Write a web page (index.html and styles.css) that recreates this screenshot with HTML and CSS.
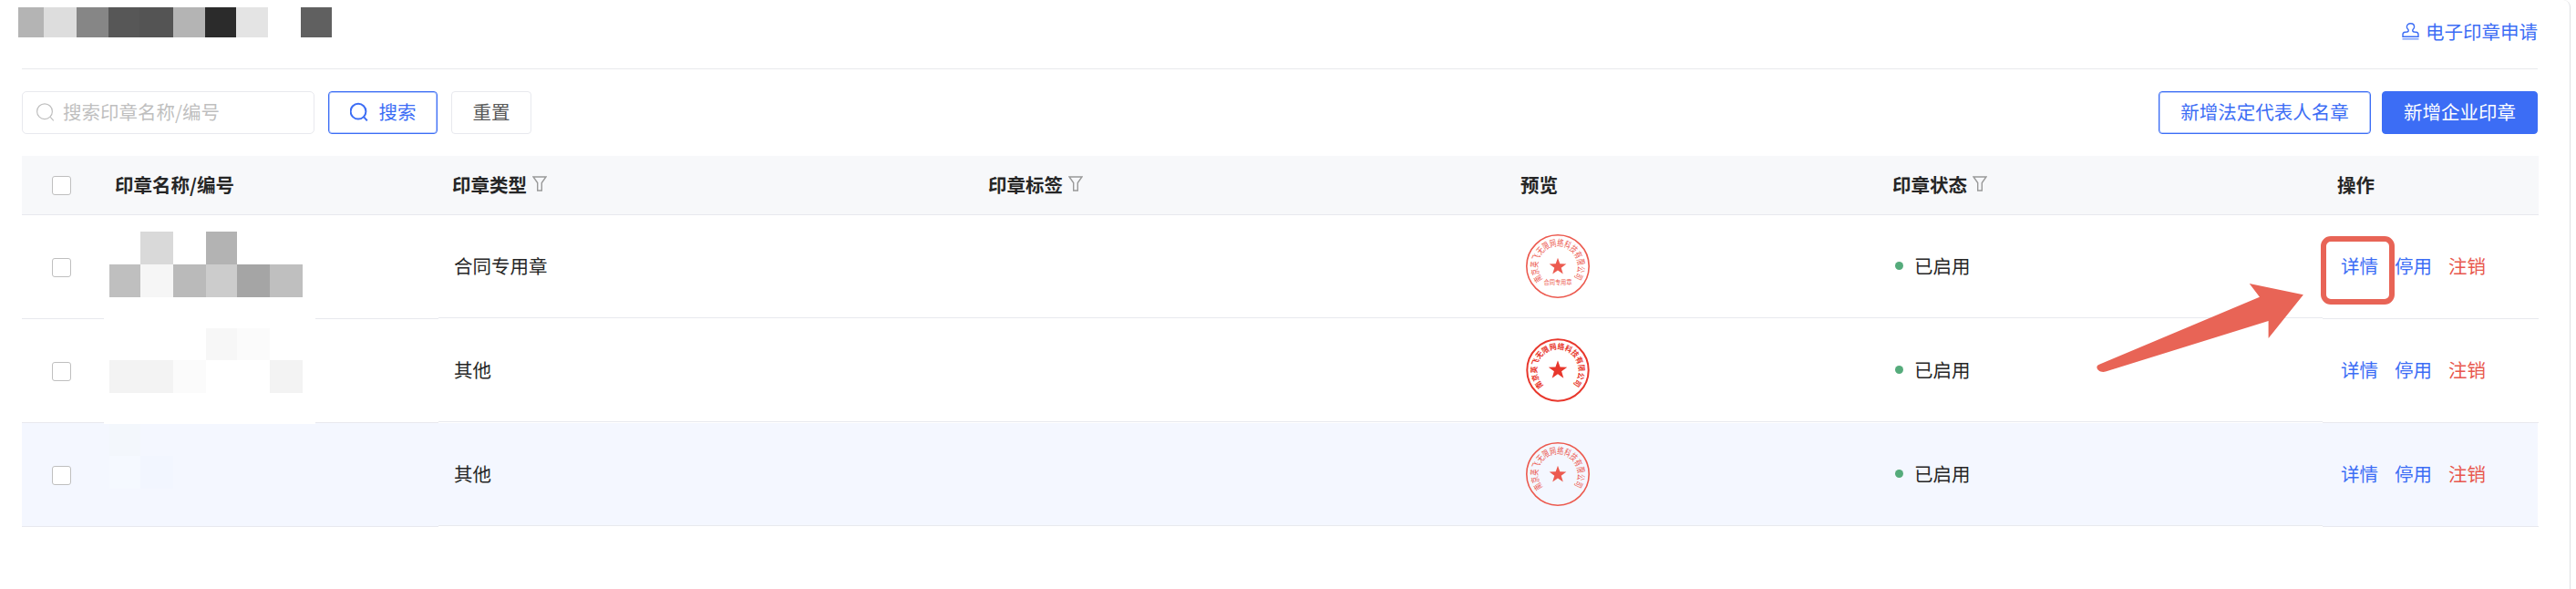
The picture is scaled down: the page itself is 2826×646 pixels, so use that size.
FILE: index.html
```html
<!DOCTYPE html>
<html lang="zh-CN">
<head>
    <meta charset="UTF-8">
    <meta name="viewport" content="width=device-width, initial-scale=1.0">
    <title>印章管理</title>
    <link rel="stylesheet" href="styles.css">
</head>
<body>
    <!-- 公用图标 -->
    <svg class="sprite" aria-hidden="true">
        <symbol id="icon-search" viewBox="0 0 20 22">
            <circle cx="9" cy="10.2" r="8.4"/>
            <path d="M15.2 16.4l3.6 4"/>
        </symbol>
        <symbol id="icon-filter" viewBox="0 0 16 17">
            <path d="M1 1h14l-4.700 6.500V16H5.700V7.500z"/>
        </symbol>
        <symbol id="icon-stamp" viewBox="0 0 19 19">
            <path d="M1 15.200v-2.400c0-1.600 1-2.300 2.500-2.500l2-.3c1.500-.3 2-1 1.600-2.200C6.700 6.900 5.400 6.200 5.400 4.500c0-2.200 1.800-3.700 4.100-3.700s4.100 1.500 4.100 3.700c0 1.700-1.300 2.400-1.700 3.300-.4 1.200.1 1.900 1.600 2.200l2 .3c1.500.2 2.500.9 2.500 2.500v2.400z"/>
            <path class="stamp-base" d="M.5 17.800h18"/>
        </symbol>
        <symbol id="icon-star" viewBox="-10 -10 20 20">
            <path d="M0-10L2.350-3.240 9.510-3.090 3.800 1.240 5.880 8.090 0 4 -5.880 8.090 -3.800 1.240 -9.510-3.090 -2.350-3.240z"/>
        </symbol>
    </svg>

    <main class="page">
        <header class="page-header">
            <div class="title-mask">
                <i class="g1"></i><i class="g2"></i><i class="g3"></i><i class="g4"></i><i class="g5"></i><i class="g1"></i><i class="g6"></i><i class="g7"></i><i></i><i class="g8"></i>
            </div>
            <a class="apply-link"><svg class="icon-stamp"><use href="#icon-stamp"/></svg>电子印章申请</a>
        </header>

        <!-- 搜索栏 -->
        <div class="toolbar">
            <div class="search-input"><svg class="icon-search"><use href="#icon-search"/></svg>搜索印章名称/编号</div>
            <button class="btn btn-outline btn-search"><svg class="icon-search"><use href="#icon-search"/></svg>搜索</button>
            <button class="btn btn-reset">重置</button>
            <button class="btn btn-outline btn-legal">新增法定代表人名章</button>
            <button class="btn btn-primary">新增企业印章</button>
        </div>

        <!-- 印章列表 -->
        <section class="table">
            <div class="row row-head">
                <div class="cell cell-check"><span class="checkbox"></span></div>
                <div class="cell cell-name">印章名称/编号</div>
                <div class="cell cell-type">印章类型<svg class="icon-filter"><use href="#icon-filter"/></svg></div>
                <div class="cell cell-tag">印章标签<svg class="icon-filter"><use href="#icon-filter"/></svg></div>
                <div class="cell cell-preview">预览</div>
                <div class="cell cell-status">印章状态<svg class="icon-filter"><use href="#icon-filter"/></svg></div>
                <div class="cell cell-action">操作</div>
            </div>

            <div class="row">
                <div class="cell cell-check fixed"><span class="checkbox"></span></div>
                <div class="cell cell-name fixed">
                    <div class="mask mask-1">
                        <i></i><i class="m1"></i><i></i><i class="m2"></i><i></i><i></i>
                        <i class="m3"></i><i class="m4"></i><i class="m5"></i><i class="m6"></i><i class="m7"></i><i class="m3"></i>
                    </div>
                </div>
                <div class="cell cell-type">合同专用章</div>
                <div class="cell cell-tag"></div>
                <div class="cell cell-preview">
                    <svg class="seal seal-light" viewBox="-36 -36 72 72">
                        <path id="arc-1" class="arc" d="M-16.500 14.500A22 22 0 1 1 16.500 14.500"/>
                        <circle r="34.200"/>
                        <use href="#icon-star" x="-9.800" y="-9.300" width="19.600" height="19.600"/>
                        <text class="seal-ring"><textPath href="#arc-1" textLength="98" lengthAdjust="spacingAndGlyphs">南京英飞无限网络科技有限公司</textPath></text>
                        <text class="seal-kind" y="19.500" text-anchor="middle" textLength="31" lengthAdjust="spacingAndGlyphs">合同专用章</text>
                    </svg>
                </div>
                <div class="cell cell-status"><span class="dot"></span>已启用</div>
                <div class="cell cell-action fixed">
                    <a class="link link-detail">详情<span class="highlight"></span></a>
                    <a class="link">停用</a>
                    <a class="link link-danger">注销</a>
                </div>
            </div>

            <div class="row">
                <div class="cell cell-check fixed"><span class="checkbox"></span></div>
                <div class="cell cell-name fixed">
                    <div class="mask mask-2">
                        <i></i><i></i><i></i><i class="m8"></i><i class="m9"></i><i></i>
                        <i class="m10"></i><i class="m10"></i><i class="m9"></i><i></i><i></i><i class="m10"></i>
                    </div>
                </div>
                <div class="cell cell-type">其他</div>
                <div class="cell cell-tag"></div>
                <div class="cell cell-preview">
                    <svg class="seal seal-bold" viewBox="-36 -36 72 72">
                        <path id="arc-2" class="arc" d="M-15.500 17A23 23 0 1 1 15.500 17"/>
                        <circle r="33.700"/>
                        <use href="#icon-star" x="-10.800" y="-10.800" width="21.600" height="21.600"/>
                        <text class="seal-ring"><textPath href="#arc-2" textLength="108" lengthAdjust="spacingAndGlyphs">南京英飞无限网络科技有限公司</textPath></text>
                    </svg>
                </div>
                <div class="cell cell-status"><span class="dot"></span>已启用</div>
                <div class="cell cell-action fixed">
                    <a class="link">详情</a>
                    <a class="link">停用</a>
                    <a class="link link-danger">注销</a>
                </div>
            </div>

            <div class="row row-hover">
                <div class="cell cell-check fixed"><span class="checkbox"></span></div>
                <div class="cell cell-name fixed">
                    <div class="mask mask-3">
                        <i class="m11"></i><i></i><i></i><i></i><i></i><i></i>
                        <i class="m12"></i><i class="m13"></i><i></i><i></i><i></i><i></i>
                    </div>
                </div>
                <div class="cell cell-type">其他</div>
                <div class="cell cell-tag"></div>
                <div class="cell cell-preview">
                    <svg class="seal seal-light" viewBox="-36 -36 72 72">
                        <circle r="34.200"/>
                        <use href="#icon-star" x="-9.800" y="-9.300" width="19.600" height="19.600"/>
                        <text class="seal-ring"><textPath href="#arc-1" textLength="98" lengthAdjust="spacingAndGlyphs">南京英飞无限网络科技有限公司</textPath></text>
                    </svg>
                </div>
                <div class="cell cell-status"><span class="dot"></span>已启用</div>
                <div class="cell cell-action fixed">
                    <a class="link">详情</a>
                    <a class="link">停用</a>
                    <a class="link link-danger">注销</a>
                </div>
            </div>

            <!-- 指向“详情”的箭头 -->
            <svg class="arrow" viewBox="0 0 230 100">
                <path d="M3.500 89.500L178.900 15.700 167.700 1 226.900 13.300 188.600 61V42L10 97.500C3 99.500-2 93 1.500 90.500z"/>
            </svg>
        </section>
    </main>
</body>
</html>
```

FILE: styles.css
```css
* {
    box-sizing: border-box;
}
body {
    margin: 0;
    background: #fff;
    color: #262626;
    font-family: "Noto Sans CJK SC", "Noto Sans", sans-serif;
    font-size: 20.5px;
    line-height: 30px;
}
.sprite {
    position: absolute;
    width: 0;
    height: 0;
}
.page {
    width: 2820px;
    height: 646px;
    padding: 0 35px 0 24px;
    border-right: 1px solid #dedfe3;
    border-top-right-radius: 8px;
    overflow: hidden;
}

/* 页头 */
.page-header {
    display: flex;
    justify-content: space-between;
    height: 76px;
    border-bottom: 1px solid #e8e9ec;
}
.title-mask {
    display: grid;
    grid-template-columns: 28px 36px 35px 34px 37px 35px 34px 35px 36px 34px;
    height: 33px;
    margin: 8px 0 0 -4px;
}
.g1 { background: #b4b4b4; }
.g2 { background: #ddd; }
.g3 { background: #868686; }
.g4 { background: #575757; }
.g5 { background: #545454; }
.g6 { background: #2b2b2b; }
.g7 { background: #e4e4e4; }
.g8 { background: #606060; }
.apply-link {
    display: flex;
    align-items: center;
    height: 30px;
    margin-top: 19px;
    color: #3c6df5;
}
.icon-stamp {
    width: 19px;
    height: 19px;
    margin: 1px 7px 0 0;
    fill: none;
    stroke: #3c6df5;
    stroke-width: 1.4;
}
.stamp-base {
    stroke-opacity: .7;
}

/* 工具栏 */
.toolbar {
    display: flex;
    height: 47px;
    margin-top: 24px;
}
.icon-search {
    width: 20px;
    height: 22px;
    margin-top: 1px;
    fill: none;
    stroke: currentColor;
    stroke-width: 2;
}
.search-input {
    display: flex;
    align-items: center;
    width: 321px;
    margin-right: 15px;
    padding: 0 0 3px 15px;
    border: 1px solid #e8e9ee;
    border-radius: 5px;
    color: #bfbfbf;
}
.search-input .icon-search {
    margin-right: 9px;
    stroke-width: 1.2;
}
.btn {
    display: flex;
    align-items: center;
    justify-content: center;
    padding: 0 0 3px;
    border: 1px solid #e8e9ee;
    border-radius: 4px;
    background: #fff;
    color: #595959;
    font: inherit;
}
.btn-outline {
    border-color: #3c6df5;
    box-shadow: inset 0 0 0 1px #b4c8fc;
    color: #3c6df5;
}
.btn-search {
    width: 120px;
    margin-right: 15px;
}
.btn-search .icon-search {
    margin-right: 12px;
}
.btn-reset {
    width: 88px;
}
.btn-legal {
    width: 233px;
    margin-left: auto;
    margin-right: 12px;
}
.btn-primary {
    width: 171px;
    border-color: #3c6df5;
    background: #3c6df5;
    color: #fff;
}

/* 表格 */
.table {
    position: relative;
    margin-top: 24px;
}
.row {
    display: grid;
    grid-template-columns: 90px 367px 587px 583px 408px 489px 237px;
    height: 114px;
}
.row-head {
    height: 65px;
    font-weight: 600;
}
.row-hover {
    background: linear-gradient(#f4f7ff, #f4f7ff) 0 0 / 100% 113px no-repeat;
}
.cell {
    display: flex;
    align-items: center;
    height: 113px;
    padding-bottom: 3px;
    border-bottom: 1px solid #e8e9ee;
}
.cell.fixed {
    height: 114px;
}
.row-head .cell {
    height: 65px;
    background: #f7f8fa;
}
.cell-check {
    padding-left: 33px;
}
.checkbox {
    width: 21px;
    height: 21px;
    margin-top: 4px;
    border: 1px solid #bfbfbf;
    border-radius: 3px;
    background: #fff;
}
.cell-name {
    position: relative;
}
.row-head .cell-name {
    padding-left: 12px;
}
.cell-type {
    padding-left: 17px;
}
.row-head .cell-type {
    padding-left: 15px;
}
.cell-tag {
    padding-left: 16px;
}
.cell-preview {
    padding-left: 22px;
}
.row-head .cell-preview {
    padding-left: 17px;
}
.cell-status {
    padding-left: 20px;
}
.row-head .cell-status {
    padding-left: 17px;
}
.cell-action {
    padding-left: 20px;
    gap: 18px;
}
.row-head .cell-action {
    padding-left: 16px;
}
.icon-filter {
    width: 16px;
    height: 17px;
    margin-left: 6px;
    fill: none;
    stroke: #999;
    stroke-width: 1.4;
}
.dot {
    width: 9px;
    height: 9px;
    margin: 2px 12px 0 0;
    border-radius: 50%;
    background: #55ab7b;
}
.link {
    position: relative;
    color: #3c6df5;
}
.link-danger {
    color: #e8584e;
}

/* 马赛克遮挡 */
.mask {
    position: absolute;
    z-index: 1;
    left: 0;
    display: grid;
    grid-template-columns: 34px 36px 36px 34px 36px 36px;
    grid-template-rows: 36px 36px;
    padding: 0 14px 0 6px;
}
.mask-1 {
    top: 18px;
}
.mask-2 {
    top: -24px;
    grid-template-rows: 35px 36px;
    height: 139px;
    padding-top: 34px;
    background: #fff;
}
.mask-3 {
    top: 1px;
    grid-template-rows: 35px 36px;
}
.m1 { background: #d9d9d9; }
.m2 { background: #b3b3b3; }
.m3 { background: #bfbfbf; }
.m4 { background: #f6f6f6; }
.m5 { background: #bababa; }
.m6 { background: #ccc; }
.m7 { background: #a5a5a5; }
.m8 { background: #f7f7f7; }
.m9 { background: #fbfbfb; }
.m10 { background: #f3f3f3; }
.m11 { background: #f3f7fc; }
.m12 { background: #f5f9ff; }
.m13 { background: #f2f6ff; }

/* 印章预览 */
.seal {
    width: 72px;
    height: 72px;
    margin-top: 2px;
}
.seal circle {
    fill: none;
    stroke-width: 1.6;
}
.seal .arc {
    fill: none;
    stroke: none;
}
.seal-light {
    fill: #ec5a4f;
}
.seal-light circle {
    stroke: #ec5a4f;
}
.seal-bold {
    fill: #e8372c;
}
.seal-bold circle {
    stroke: #e8372c;
    stroke-width: 2;
}
.seal-ring {
    font-size: 10px;
}
.seal-bold .seal-ring {
    font-size: 8.5px;
    font-weight: 700;
}
.seal-kind {
    font-size: 7px;
}

/* 标注 */
.highlight {
    position: absolute;
    top: -17px;
    left: -22px;
    width: 81px;
    height: 75px;
    border: 6px solid #e86456;
    border-radius: 11px;
}
.arrow {
    position: absolute;
    z-index: 2;
    top: 139px;
    left: 2276px;
    width: 230px;
    height: 100px;
    fill: #e86456;
}
```
